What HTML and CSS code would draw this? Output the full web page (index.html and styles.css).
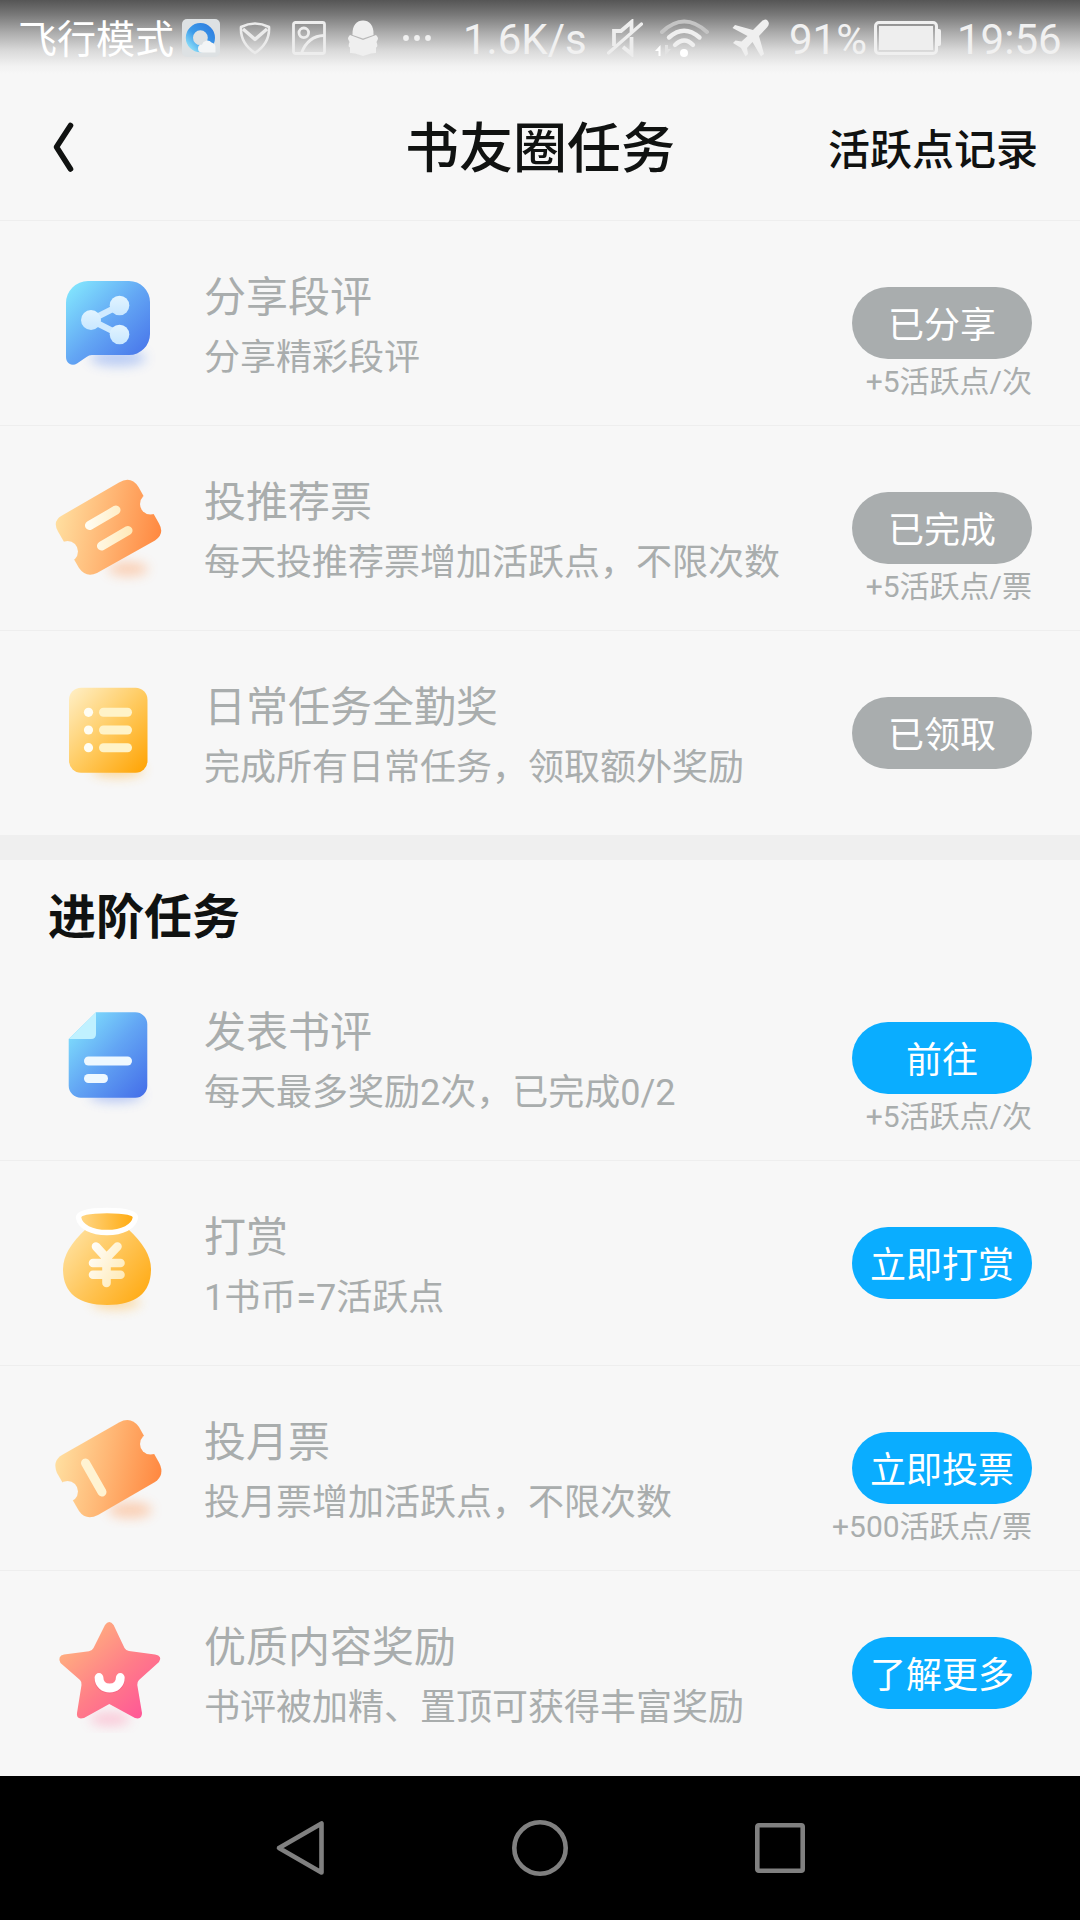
FILE: index.html
```html
<!DOCTYPE html>
<html lang="zh-CN">
<head>
<meta charset="utf-8">
<title>书友圈任务</title>
<link rel="stylesheet" href="styles.css">
</head>
<body>
<div class="status">
  <span class="carrier">飞行模式</span>
  <svg class="s-browser" width="38" height="38" viewBox="0 0 38 38"><defs><linearGradient id="ring" x1="1" y1="0" x2="0" y2="1"><stop offset="0" stop-color="#2f7fe0"/><stop offset=".55" stop-color="#3b9bea"/><stop offset="1" stop-color="#8fe0f8"/></linearGradient></defs><rect width="38" height="38" rx="5" fill="#dde1e3"/><circle cx="18.4" cy="18.700" r="11" fill="none" stroke="url(#ring)" stroke-width="7.200"/><path d="M20 33.500a4 4 0 0 1 0-8 5.500 5.500 0 0 1 9.500-2q4 1 4 5v5z" fill="#f3f5f6"/></svg>
  <svg class="s-shield" width="32" height="34" viewBox="0 0 32 34" fill="none" stroke="#ebebeb" stroke-width="2.600" stroke-linejoin="round"><path d="M2 6Q16-1 30 6Q31 22 16 32Q1 22 2 6z"/><path d="M4 8l12 10.500L28 8" stroke-width="3.400"/></svg>
  <svg class="s-image" width="34" height="34" viewBox="0 0 34 34" fill="none" stroke="#ededed" stroke-width="2.800"><rect x="1.500" y="1.500" width="31" height="31" rx="2"/><circle cx="11.800" cy="11.800" r="4.800"/><path d="M9.500 32Q16 15 32 14.500"/></svg>
  <svg class="s-qq" width="32" height="36" viewBox="0 0 32 36" fill="#efefef"><path d="M5.500 15C5 5 10 .5 16 .5S27 5 26.500 15L16 18.500z"/><path d="M3 15l13 5L29 15q3 3 1.500 5l-1 2q2 5-.500 5.500v5.500q-3 0-5 .5l-8 2.500-8-2.500q-2-.5-5-.5v-5.500q-2.500-.5-.500-5.500l-1-2Q0 18 3 15z"/></svg>
  <svg class="s-dots" width="28" height="6" viewBox="0 0 28 6" fill="#f0f0f0"><circle cx="3" cy="3" r="2.900"/><circle cx="14" cy="3" r="2.900"/><circle cx="25" cy="3" r="2.900"/></svg>
  <span class="speed">1.6K/s</span>
  <svg class="s-mute" width="36" height="38" viewBox="0 0 36 38" fill="none" stroke="#ededed"><path d="M7 27V12h7L24.500 3v10M16 28l8.500 7V18" stroke-width="3.800"/><path d="M1.500 34L34.500 5" stroke-width="3.200" stroke-linecap="round"/></svg>
  <svg class="s-wifi" width="55" height="38" viewBox="0 0 55 38" fill="none" stroke="#efefef" stroke-width="4.400" stroke-linecap="round"><path d="M7 13Q29-8 52 13" stroke="#c4c4c4" stroke-width="4"/><path d="M14 18.500Q29 5 44.500 18.500M20 26q9.500-9 18 0"/><circle cx="29" cy="34" r="4" fill="#fff" stroke="none"/><path d="M0 32l5.500-6v11H3.500v-5z" fill="#fff" stroke="none"/><path d="M10 26v11l6-7h-3v-4z" fill="#e2e2e2" stroke="none"/></svg>
  <svg class="s-plane" width="38" height="38" viewBox="0 0 38 38" fill="#efefef"><path d="M35.500 1.500q3 3-.5 7L27 17l5 18-3 2.500L20.500 23l-5.500 6 1 6-2.500 2.500-4.500-8.500L1 24l2.500-2.500 6 1 6-5.500L.5 9 3 6l18 5L29 3q4-4 6.500-1.500z"/></svg>
  <span class="pct">91%</span>
  <svg class="s-battery" width="67" height="34" viewBox="0 0 67 34"><rect x="1.500" y="1.500" width="61" height="31" rx="3.500" fill="none" stroke="#f0f0f0" stroke-width="3"/><rect x="5" y="5" width="54" height="24" fill="#eee"/><path d="M63 8h2q2 0 2 2v13q0 2-2 2h-2z" fill="#f0f0f0"/></svg>
  <span class="clock">19:56</span>
</div>
<header class="header">
  <svg class="back" width="24" height="52" viewBox="0 0 24 52"><path d="M18.500 4.500L4.500 26l14 22" fill="none" stroke="#101211" stroke-width="5.600" stroke-linecap="round" stroke-linejoin="round"/></svg>
  <h1 class="title">书友圈任务</h1>
  <a class="record">活跃点记录</a>
</header>
<main>
  <section class="tasks">
    <article class="task">
      <svg class="icon" viewBox="0 0 120 120">
        <defs>
          <linearGradient id="blue" x1="0" y1="0" x2="1" y2="1"><stop offset="0" stop-color="#86edff"/><stop offset=".5" stop-color="#63a6f4"/><stop offset="1" stop-color="#436ce8"/></linearGradient>
          <linearGradient id="pale" x1="0" y1="0" x2="0" y2="1"><stop offset="0" stop-color="#e2f4ff"/><stop offset="1" stop-color="#c8e7ff"/></linearGradient>
          <filter id="soft" x="-50%" y="-150%" width="200%" height="400%"><feGaussianBlur stdDeviation="6"/></filter>
        </defs>
        <ellipse cx="70" cy="95" rx="28" ry="8" fill="#5d8bf0" opacity=".4" filter="url(#soft)"/>
        <path d="M40 18H81a21 21 0 0 1 21 21V71a21 21 0 0 1-21 21H44q-3 0-5.500 2L29 100.500Q25 103 21 100.500 18 98 18 94V40a22 22 0 0 1 22-22z" fill="url(#blue)"/>
        <path d="M71.500 42.500L43 57l28.500 14.500" fill="none" stroke="#cfeaff" stroke-width="6.400"/>
        <g fill="url(#pale)"><circle cx="43" cy="57" r="10"/><circle cx="71.500" cy="42.500" r="9.800"/><circle cx="71.500" cy="71.500" r="9.800"/></g>
      </svg>
      <div class="info"><h3>分享段评</h3><p>分享精彩段评</p></div>
      <div class="action"><span class="btn done">已分享</span><small>+5活跃点/次</small></div>
    </article>
    <article class="task">
      <svg class="icon" viewBox="0 0 120 120">
        <defs>
          <linearGradient id="orange" gradientUnits="userSpaceOnUse" x1="8" y1="50" x2="114" y2="70"><stop offset="0" stop-color="#ffdfa0"/><stop offset=".5" stop-color="#ffb472"/><stop offset="1" stop-color="#ff873f"/></linearGradient>
          <linearGradient id="cream" gradientUnits="userSpaceOnUse" x1="37" y1="60" x2="84" y2="60"><stop offset="0" stop-color="#fffdf4"/><stop offset="1" stop-color="#ffe9b8"/></linearGradient>
          <mask id="notch" maskUnits="userSpaceOnUse" x="0" y="0" width="120" height="120"><rect width="120" height="120" fill="#fff"/><circle cx="102.500" cy="36" r="10.500"/><circle cx="19.500" cy="83.500" r="10.500"/></mask>
        </defs>
        <ellipse cx="80" cy="101" rx="20" ry="7" fill="#ff9a5a" opacity=".42" filter="url(#soft)"/>
        <g mask="url(#notch)"><path d="M14 47.500L71 14.500Q83 7.500 90.500 19L111 55.500Q117 66 107 72.500L49 105Q38 110 31 100L10 63.500Q4 53 14 47.500z" fill="url(#orange)"/></g>
        <path d="M41.500 57.500L68 42M53.500 78L80 62.500" stroke="url(#cream)" stroke-width="9" stroke-linecap="round"/>
      </svg>
      <div class="info"><h3>投推荐票</h3><p>每天投推荐票增加活跃点，不限次数</p></div>
      <div class="action"><span class="btn done">已完成</span><small>+5活跃点/票</small></div>
    </article>
    <article class="task">
      <svg class="icon" viewBox="0 0 120 120">
        <defs><linearGradient id="gold" x1="0" y1="0" x2="1" y2="1"><stop offset="0" stop-color="#fff0c8"/><stop offset=".5" stop-color="#ffcb61"/><stop offset="1" stop-color="#ffa200"/></linearGradient></defs>
        <ellipse cx="70" cy="97" rx="26" ry="7" fill="#ffb02e" opacity=".45" filter="url(#soft)"/>
        <rect x="21" y="14.700" width="78.500" height="85" rx="12" fill="url(#gold)"/>
        <g fill="#fffdf2"><circle cx="40.500" cy="39.300" r="4.600"/><circle cx="40.500" cy="57" r="4.600"/><circle cx="40.500" cy="74.700" r="4.600"/></g>
        <g fill="#fff3c8"><rect x="51" y="34.800" width="33" height="9" rx="4.500"/><rect x="51" y="52.500" width="33" height="9" rx="4.500"/><rect x="51" y="70.200" width="33" height="9" rx="4.500"/></g>
      </svg>
      <div class="info"><h3>日常任务全勤奖</h3><p>完成所有日常任务，领取额外奖励</p></div>
      <div class="action"><span class="btn done">已领取</span></div>
    </article>
  </section>
  <section class="tasks advanced">
    <h2>进阶任务</h2>
    <article class="task">
      <svg class="icon" viewBox="0 0 120 120">
        <ellipse cx="68" cy="97" rx="27" ry="7" fill="#5a83f0" opacity=".42" filter="url(#soft)"/>
        <path d="M48 14.300H87a12 12 0 0 1 12.300 12V87.700a12 12 0 0 1-12 12H33a12 12 0 0 1-12.300-12V41z" fill="url(#blue)"/>
        <path d="M48 14.300V36q0 5-5 5H20.700z" fill="#c0f1ff"/>
        <rect x="36" y="58.500" width="48" height="9" rx="4.500" fill="#eef8ff"/><rect x="36" y="76" width="24" height="9" rx="4.500" fill="#eef8ff"/>
      </svg>
      <div class="info"><h3>发表书评</h3><p>每天最多奖励2次，已完成0/2</p></div>
      <div class="action"><span class="btn">前往</span><small>+5活跃点/次</small></div>
    </article>
    <article class="task">
      <svg class="icon" viewBox="0 0 120 120">
        <defs>
          <linearGradient id="bag" x1="0" y1=".1" x2="1" y2=".8"><stop offset="0" stop-color="#ffe3a4"/><stop offset=".5" stop-color="#ffc65a"/><stop offset="1" stop-color="#ffab15"/></linearGradient>
          <linearGradient id="mouth"><stop offset="0" stop-color="#ffd88a"/><stop offset="1" stop-color="#ffa90c"/></linearGradient>
          <linearGradient id="yen" gradientUnits="userSpaceOnUse" x1="41" y1="50" x2="77" y2="70"><stop offset="0" stop-color="#fffdf8"/><stop offset="1" stop-color="#ffebb9"/></linearGradient>
        </defs>
        <ellipse cx="68" cy="99" rx="24" ry="7" fill="#ffb02e" opacity=".42" filter="url(#soft)"/>
        <path d="M38 26H80Q103 47 103 66C103 90 88 102 59 102S15 90 15 66Q15 47 38 26z" fill="url(#bag)"/>
        <path d="M30.500 14.500Q31 7.500 59 7.500T87.500 14.500C86 24 74 29.500 59 29.500S32 24 30.500 14.500z" fill="url(#mouth)" stroke="#fff" stroke-width="5.400"/>
        <path d="M48 43.500L58.500 55 69.500 43.500M58.500 55V80M45 60H72.500M45 71.700H72.500" fill="none" stroke="url(#yen)" stroke-width="8.600" stroke-linecap="round" stroke-linejoin="round"/>
      </svg>
      <div class="info"><h3>打赏</h3><p>1书币=7活跃点</p></div>
      <div class="action"><span class="btn">立即打赏</span></div>
    </article>
    <article class="task">
      <svg class="icon" viewBox="0 0 120 120">
        <ellipse cx="82" cy="102" rx="22" ry="8" fill="#ff9a5a" opacity=".42" filter="url(#soft)"/>
        <g mask="url(#notch)"><path d="M14 47L71 14.500Q83 8 91 19L111.500 55.500Q117 67 107 74L50 107Q38 113 31 103L9 65Q4 53 14 47z" fill="url(#orange)"/></g>
        <path d="M37.500 55L54 84" stroke="#fff3d2" stroke-width="9" stroke-linecap="round"/>
      </svg>
      <div class="info"><h3>投月票</h3><p>投月票增加活跃点，不限次数</p></div>
      <div class="action"><span class="btn">立即投票</span><small>+500活跃点/票</small></div>
    </article>
    <article class="task">
      <svg class="icon" viewBox="0 0 120 120">
        <defs><linearGradient id="pink" x1=".1" y1=".1" x2=".9" y2=".95"><stop offset="0" stop-color="#ffb77e"/><stop offset=".55" stop-color="#ff7d88"/><stop offset="1" stop-color="#ff5598"/></linearGradient></defs>
        <ellipse cx="62" cy="106" rx="20" ry="7" fill="#ff87ac" opacity=".4" filter="url(#soft)"/>
        <path d="M57 12Q61.300 6 65.600 12L76.500 35Q78 37.700 81 38L107 41.500Q115 43 111 49L91 67Q89 69 89.300 72L94 100Q94 107 87 105L61.300 91 36 105Q28 107 29 100L33.500 72Q34 69 32 67L12.500 50Q9 43 16 41.500L41 38.200Q44 38 45.500 35z" fill="url(#pink)"/>
        <path d="M51 66.500c0 12.500 21.300 12.500 21.300 0" fill="none" stroke="#e94878" stroke-width="9" stroke-linecap="round" opacity=".35"/>
        <path d="M51 64.500c0 14 21.300 14 21.300 0" fill="none" stroke="#fff" stroke-width="8.800" stroke-linecap="round"/>
      </svg>
      <div class="info"><h3>优质内容奖励</h3><p>书评被加精、置顶可获得丰富奖励</p></div>
      <div class="action"><span class="btn">了解更多</span></div>
    </article>
  </section>
</main>
<nav class="nav">
  <svg width="50" height="56" viewBox="0 0 50 56"><path d="M46.500 3.500V52.500L4 28z" /></svg>
  <svg width="56" height="56" viewBox="0 0 56 56"><circle cx="28" cy="28" r="25.700"/></svg>
  <svg width="50" height="50" viewBox="0 0 50 50"><rect x="2.300" y="2.300" width="45.400" height="45.400" rx="1.500"/></svg>
</nav>
</body>
</html>
```
FILE: styles.css
```css
* { box-sizing: border-box; margin: 0; padding: 0; }

body {
  width: 1080px;
  height: 1920px;
  overflow: hidden;
  display: flex;
  flex-direction: column;
  background: #f7f7f7;
  color: #101211;
  font-family: Roboto, "Noto Sans CJK SC", sans-serif;
  white-space: nowrap;
}

svg { display: block; flex: none; }

.status {
  height: 74px;
  flex: none;
  display: flex;
  align-items: center;
  padding: 1px 0 0 18px;
  background: linear-gradient(#555 0, #777 14px, #aaa 32px, #d8d8d8 50px, #f2f2f2 66px, #f7f7f7 74px);
  color: #f1f1f1;
  font-size: 42px;
  line-height: 74px;
}

.carrier { width: 164px; padding-top: 5px; color: #fff; font-size: 39px; }
.s-browser { margin-right: 19px; }
.s-shield { margin-right: 21px; }
.s-image { margin-right: 21px; }
.s-qq { margin-right: 24px; }
.s-dots { margin-right: 32px; }
.speed { width: 144px; padding-top: 5px; }
.s-mute { margin-right: 12px; }
.s-wifi { margin-right: 22px; }
.s-plane { margin-right: 19px; }
.pct { width: 85px; padding-top: 5px; }
.s-battery { margin-right: 16px; }
.clock { padding-top: 5px; }

.header {
  height: 147px;
  flex: none;
  display: grid;
  grid-template-columns: 1fr auto 1fr;
  align-items: center;
  padding: 0 42px 0 52px;
  border-bottom: 1px solid #eee;
}

.title { font-size: 54px; font-weight: 500; line-height: 80px; padding-top: 6px; transform: translateX(-5px); }
.record { justify-self: end; font-size: 42px; font-weight: 500; line-height: 60px; padding-top: 8px; }

.tasks { display: flex; flex-direction: column; }

.advanced { border-top: 25px solid #efefef; }

.advanced h2 {
  height: 96px;
  padding: 10px 0 0 48px;
  font-size: 48px;
  font-weight: 700;
  line-height: 96px;
}

.task {
  height: 205px;
  display: flex;
  padding: 42px 48px 0;
  border-bottom: 1px solid #eee;
}

.task:last-child { height: 204px; border-bottom: 0; }

.icon { width: 120px; height: 120px; }

.info { flex: 1; padding: 5px 0 0 36px; color: #a9adad; }
.info h3 { font-size: 42px; font-weight: 400; line-height: 60px; }
.info p { font-size: 36px; line-height: 60px; }

.action {
  display: flex;
  flex-direction: column;
  align-items: flex-end;
  padding-top: 24px;
}

.btn {
  width: 180px;
  height: 72px;
  border-radius: 36px;
  background: #0aadff;
  color: #fff;
  font-size: 36px;
  line-height: 78px;
  text-align: center;
}

.btn.done { background: #a9adae; }

.action small { color: #a9adad; font-size: 30px; line-height: 46px; }

.nav {
  margin-top: auto;
  height: 144px;
  flex: none;
  display: flex;
  align-items: center;
  justify-content: center;
  gap: 187px;
  background: #000;
}

.nav svg { fill: none; stroke: #808080; stroke-width: 4.600; stroke-linejoin: round; }
```
